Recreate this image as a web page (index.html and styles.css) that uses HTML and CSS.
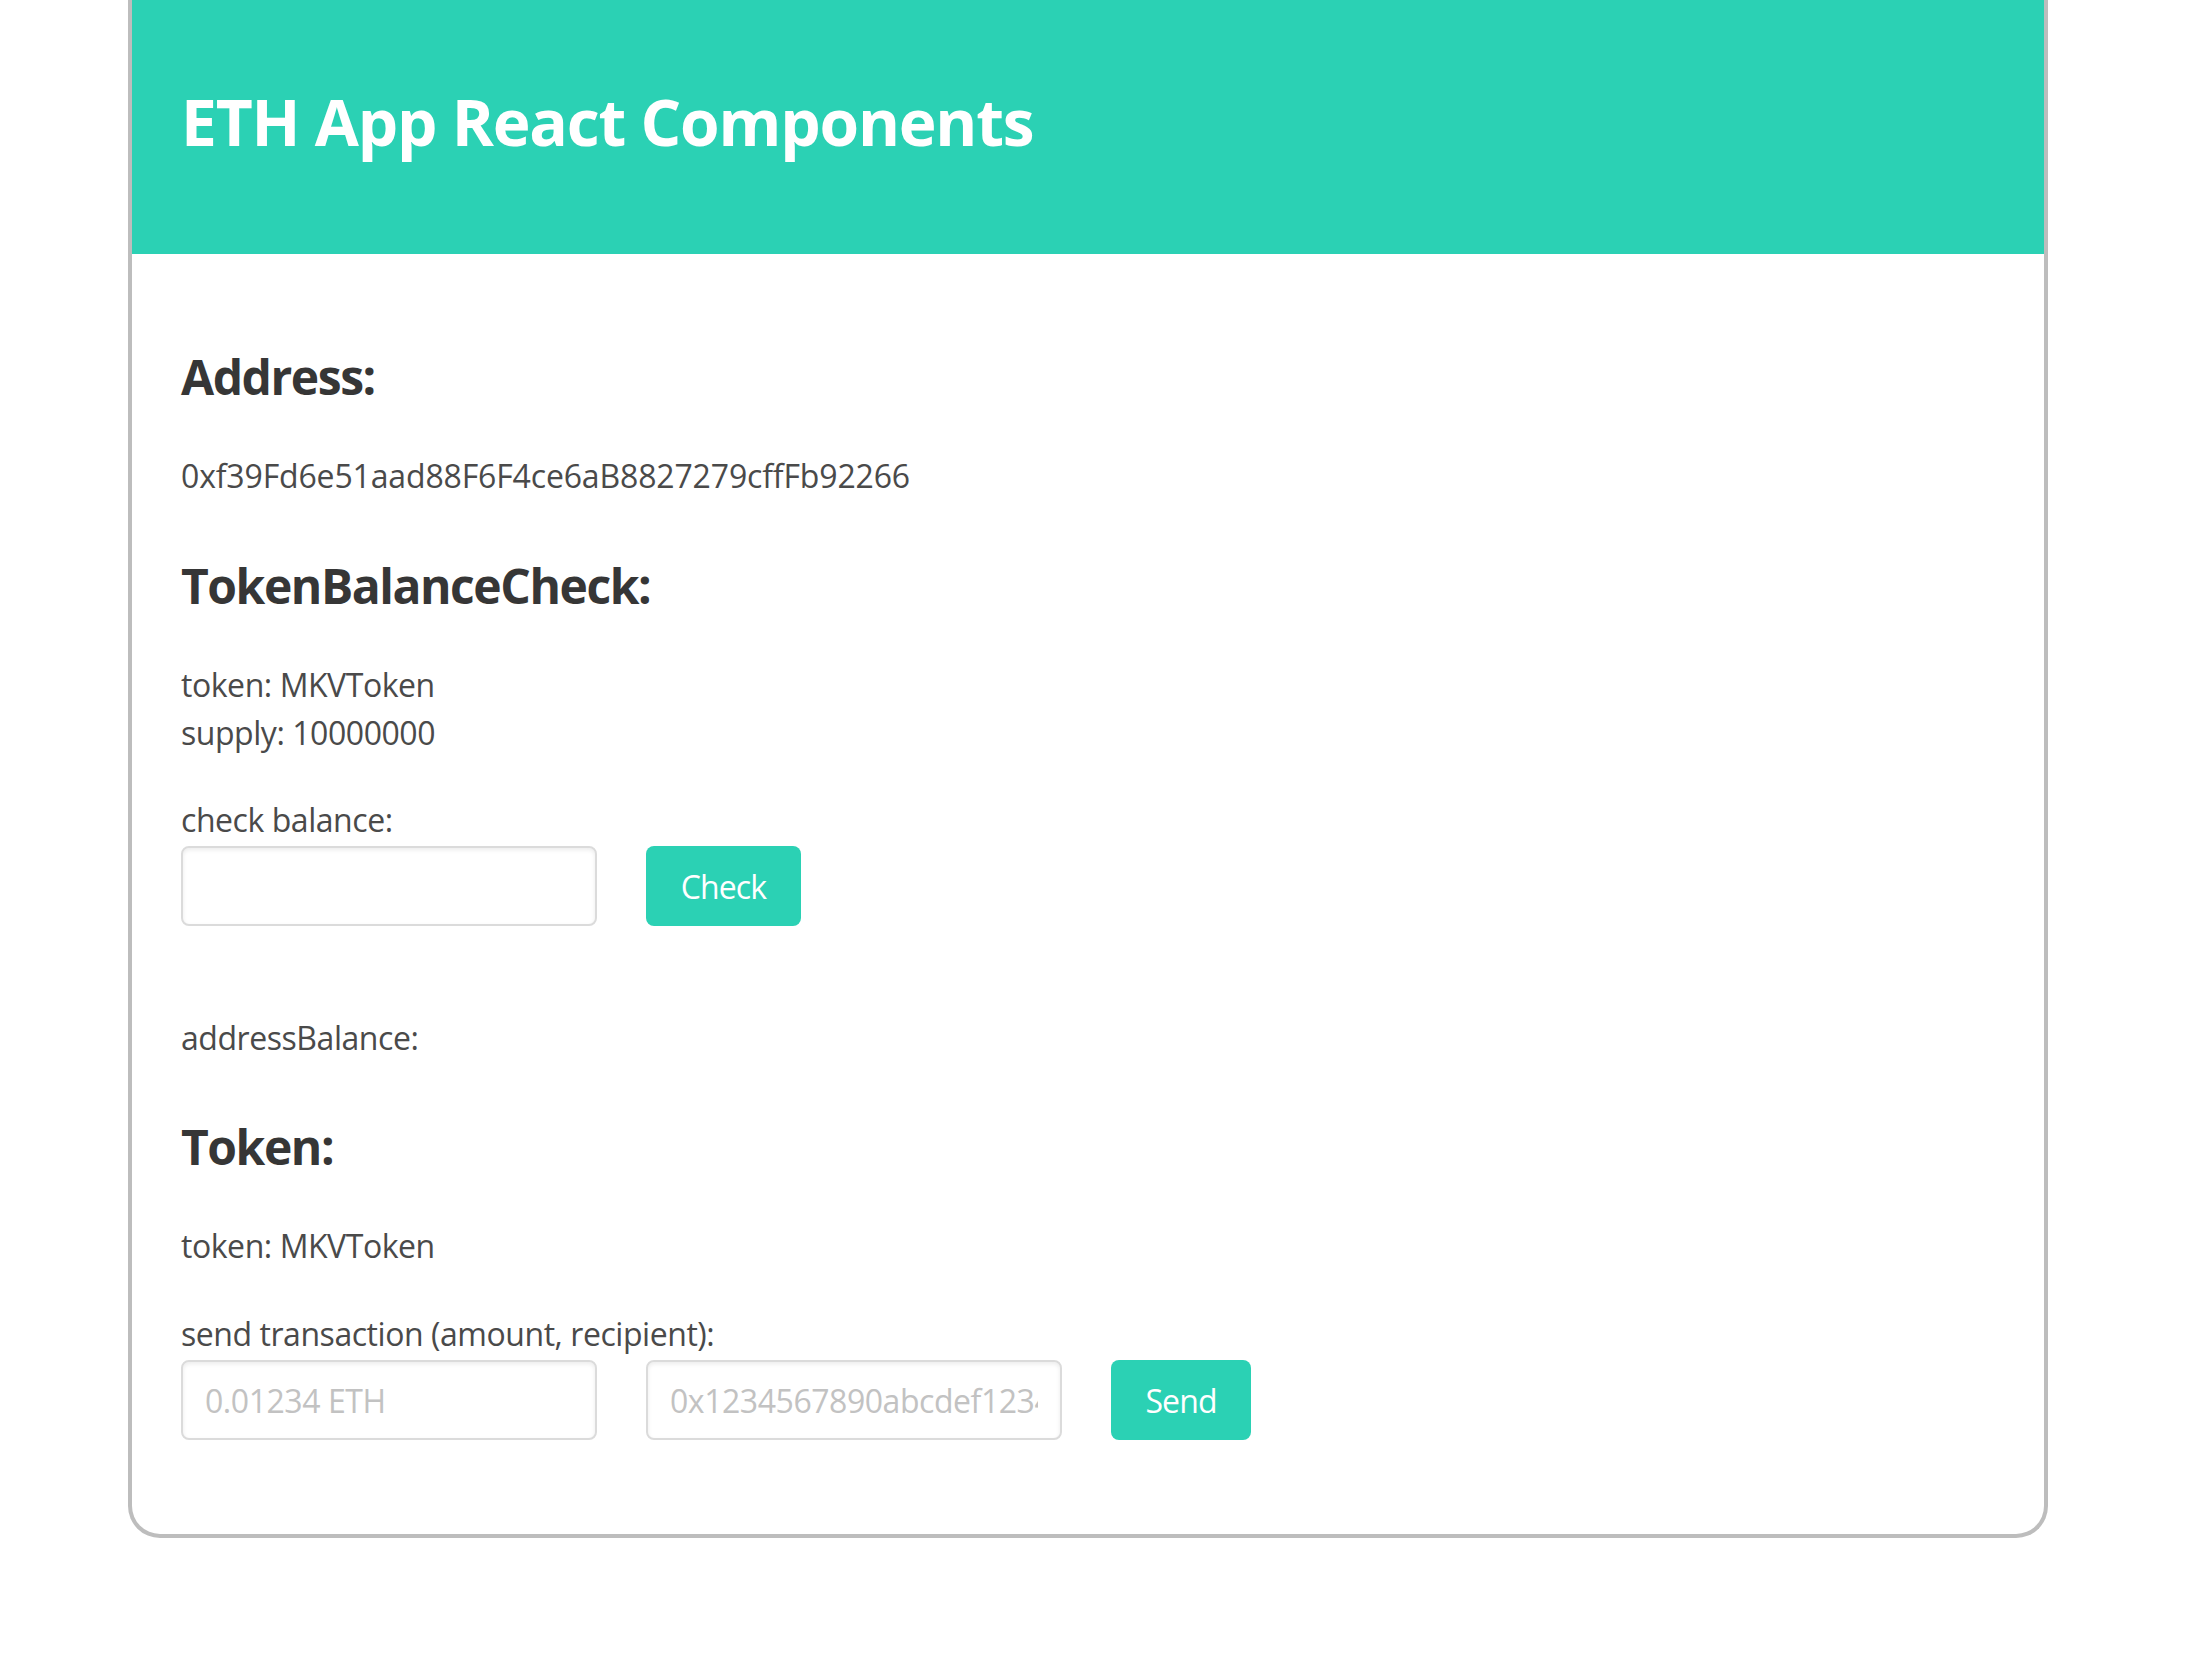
FILE: index.html
```html
<!DOCTYPE html>
<html lang="en">
<head>
<meta charset="utf-8">
<title>ETH App React Components</title>
<link rel="stylesheet" href="styles.css">
</head>
<body>
<div class="card">
  <header class="hero">
    <h1 class="title">ETH App React Components</h1>
  </header>
  <main class="content">
    <section class="block block-first">
      <h2 class="heading">Address:</h2>
      <p class="text text-after-heading address">0xf39Fd6e51aad88F6F4ce6aB8827279cffFb92266</p>
    </section>
    <section class="block">
      <h2 class="heading">TokenBalanceCheck:</h2>
      <p class="text text-after-heading">token: MKVToken<br>supply: 10000000</p>
      <label class="text label">check balance:</label>
      <div class="row">
        <input class="input" type="text">
        <button class="button btn-check" type="button">Check</button>
      </div>
      <p class="text result">addressBalance:</p>
    </section>
    <section class="block block-token">
      <h2 class="heading">Token:</h2>
      <p class="text text-after-heading">token: MKVToken</p>
      <label class="text label label-send">send transaction (amount, recipient):</label>
      <div class="row">
        <input class="input" type="text" placeholder="0.01234 ETH">
        <input class="input" type="text" placeholder="0x1234567890abcdef1234567890abcdef12345678">
        <button class="button btn-send" type="button">Send</button>
      </div>
    </section>
  </main>
</div>
</body>
</html>
```

FILE: styles.css
```css
* { box-sizing: border-box; }

html, body {
  margin: 0;
  padding: 0;
  background: #ffffff;
}

body {
  font-family: "Open Sans", "Noto Sans", "Liberation Sans", sans-serif;
  color: #4a4a4a;
}

.card {
  margin-left: 128px;
  width: 1920px;
  border: 4px solid #bdbdbd;
  border-top: none;
  border-radius: 0 0 32px 32px;
  overflow: hidden;
}

.hero {
  background: #2bd1b4;
  height: 254px;
  padding: 82px 49px 0;
}

.title {
  margin: 0;
  font-size: 64px;
  line-height: 80px;
  font-weight: 700;
  color: #ffffff;
  letter-spacing: -1.2px;
}

.content {
  padding: 95px 49px 94px;
}

.block + .block {
  margin-top: 58px;
}

.block + .block-token {
  margin-top: 57px;
}

.heading {
  margin: 0;
  font-size: 48px;
  line-height: 56px;
  font-weight: 700;
  color: #363636;
  letter-spacing: -1.45px;
}

.text {
  display: block;
  margin: 0;
  font-size: 32px;
  line-height: 48px;
  letter-spacing: -0.45px;
}

.address {
  letter-spacing: -0.15px;
}

.text-after-heading {
  margin-top: 47px;
}

.label {
  margin-top: 39px;
  margin-bottom: 2px;
}

.label-send {
  margin-top: 40px;
}

.row {
  display: flex;
  gap: 49px;
  align-items: flex-start;
}

.input {
  width: 416px;
  height: 80px;
  margin: 0;
  padding: 0 22px;
  border: 2px solid #dbdbdb;
  border-radius: 8px;
  box-shadow: inset 0 2px 4px rgba(10, 10, 10, 0.08);
  font-family: inherit;
  font-size: 32px;
  color: #363636;
  background: #ffffff;
  letter-spacing: -0.45px;
  outline: none;
}

.input::placeholder {
  color: #c2c2c2;
}

.button {
  height: 80px;
  margin: 0;
  padding: 0 32px;
  border: 2px solid transparent;
  border-radius: 8px;
  background: #2bd1b4;
  color: #ffffff;
  font-family: inherit;
  font-size: 32px;
  letter-spacing: -0.9px;
  cursor: pointer;
}

.btn-check { width: 155px; }
.btn-send { width: 140px; }

.result {
  margin-top: 88px;
}
```
